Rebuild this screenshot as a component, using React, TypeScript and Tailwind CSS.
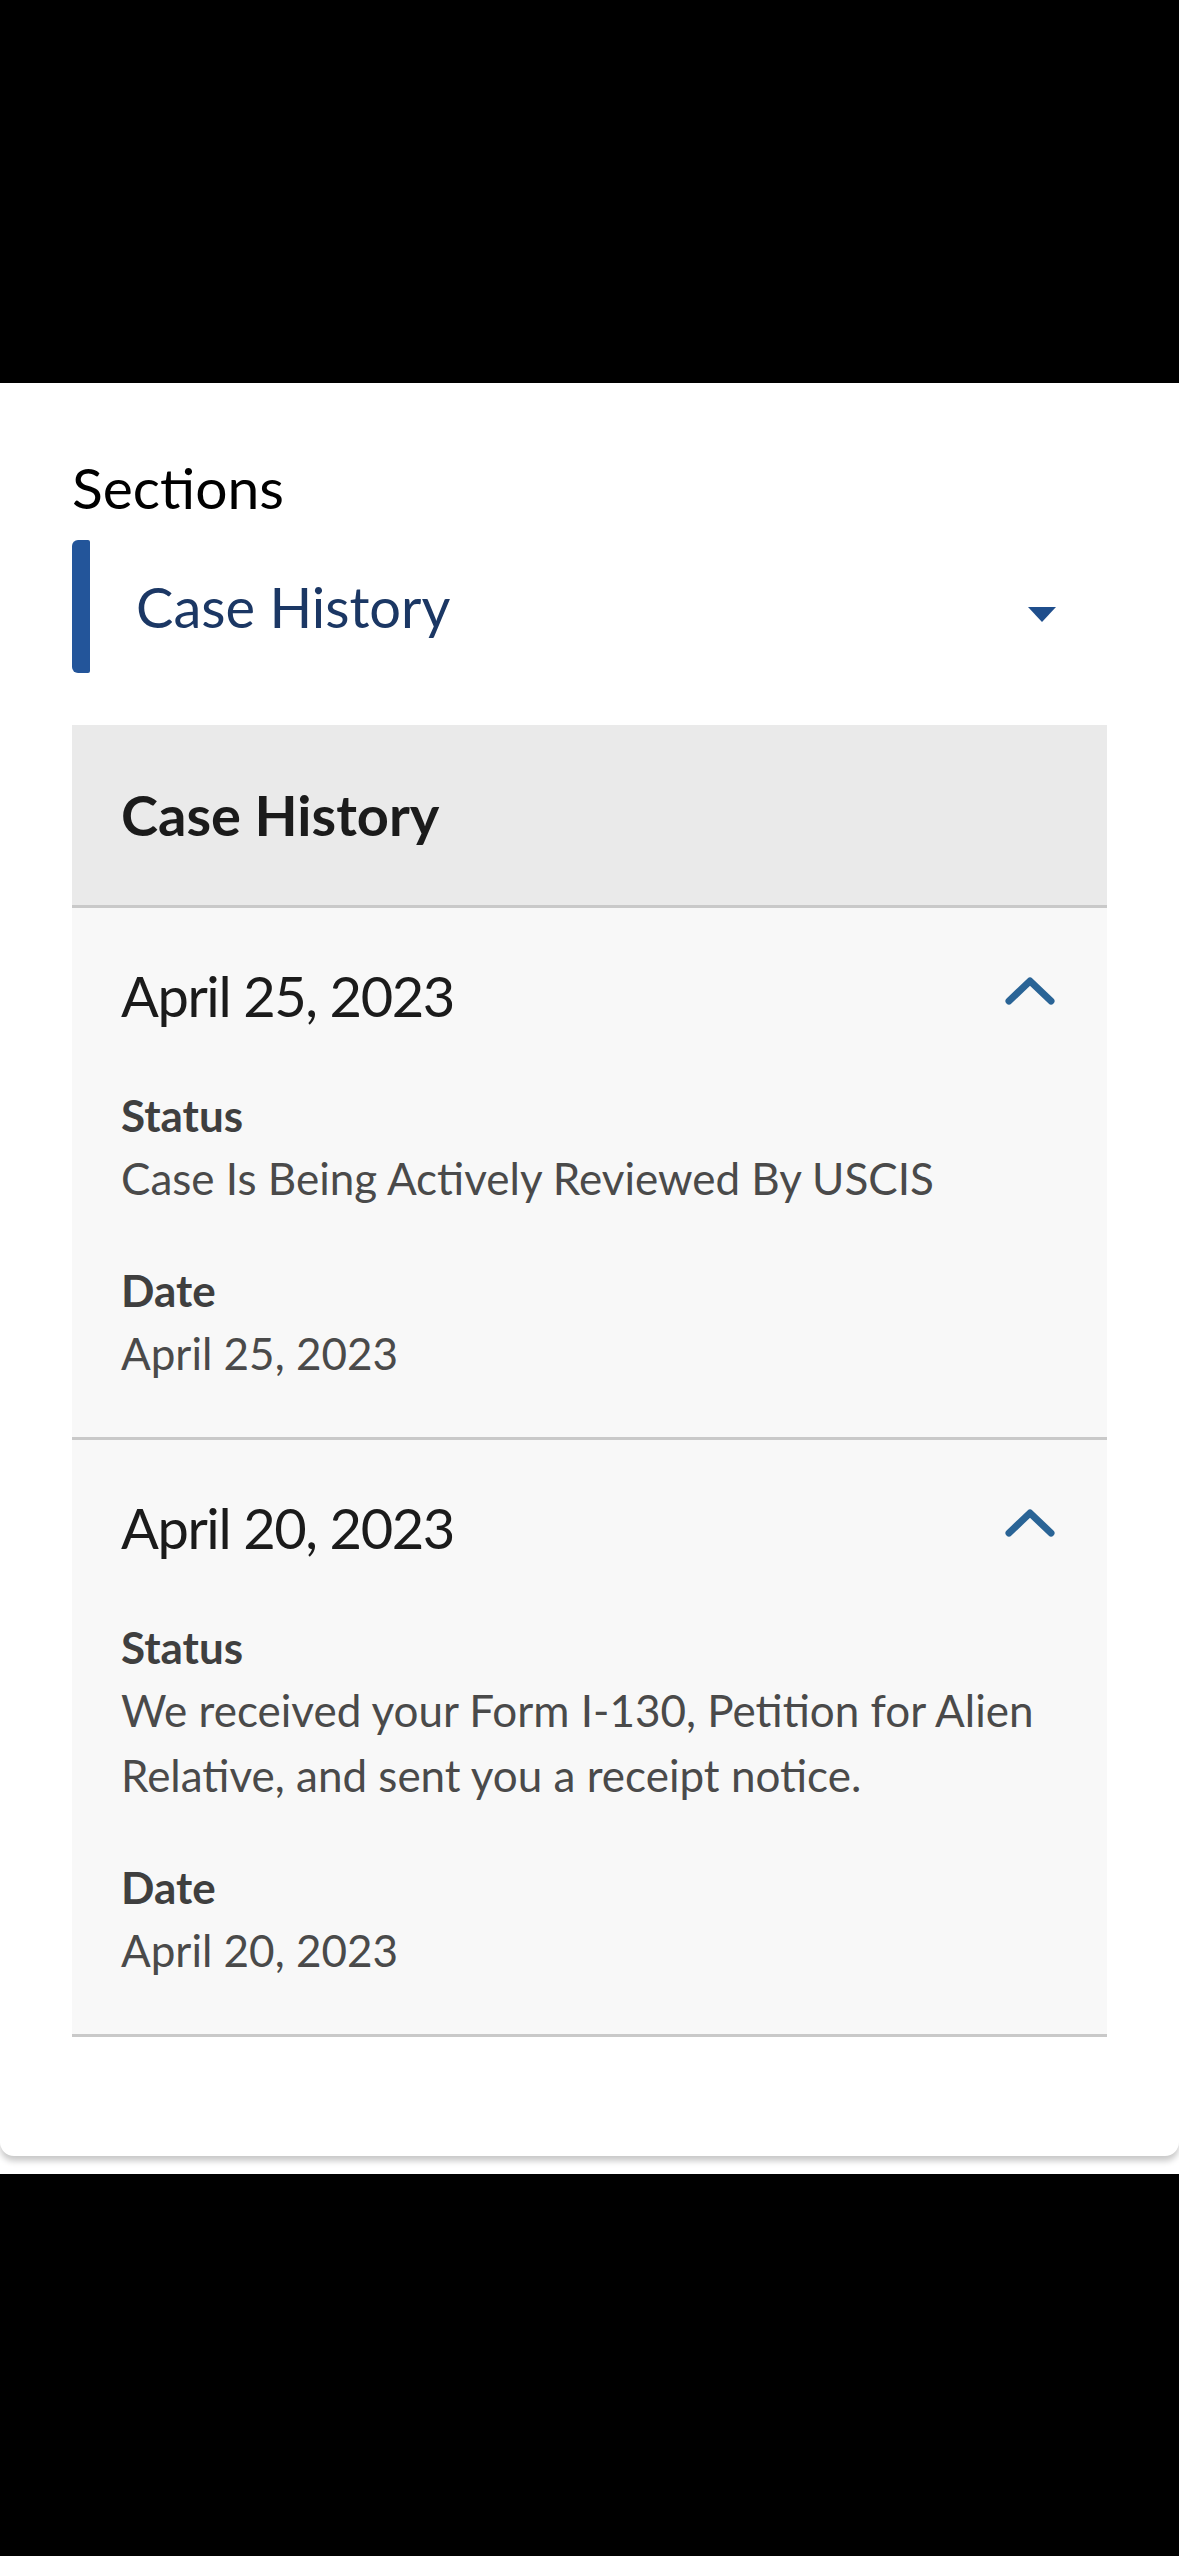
import type { ReactNode } from "react"

type HistoryEntry = {
  date: string
  status: string
}

const entries: HistoryEntry[] = [
  { date: "April 25, 2023", status: "Case Is Being Actively Reviewed By USCIS" },
  {
    date: "April 20, 2023",
    status: "We received your Form I-130, Petition for Alien Relative, and sent you a receipt notice.",
  },
]

function ChevronUp() {
  return (
    <svg width="50" height="28" viewBox="0 0 50 28" fill="none">
      <polyline
        points="4,24 25,4 46,24"
        stroke="#2a6496"
        strokeWidth="7"
        strokeLinecap="round"
        strokeLinejoin="round"
      />
    </svg>
  )
}

function Field({ label, children }: { label: string; children: ReactNode }) {
  return (
    <div>
      <div className="text-[44px] font-bold leading-[62px] text-[#3f3f3f]">{label}</div>
      <div className="text-[44px] leading-[65px] text-[#4a4a4a]">{children}</div>
    </div>
  )
}

function HistoryItem({ entry }: { entry: HistoryEntry }) {
  return (
    <section className="border-b-[3px] border-[#c9c9c9] bg-[#f8f8f8] pb-[51px] pl-[49px] pr-[52px] pt-[56px]">
      <div className="flex items-start justify-between">
        <h3 className="text-[56px] leading-[64px] tracking-[-1.4px] text-[#1b1b1b]">{entry.date}</h3>
        <div className="mt-[13px]">
          <ChevronUp />
        </div>
      </div>
      <div className="mt-[56px] space-y-[48px]">
        <Field label="Status">{entry.status}</Field>
        <Field label="Date">{entry.date}</Field>
      </div>
    </section>
  )
}

export default function App() {
  return (
    <div className="min-h-[2556px] bg-black font-['Lato',sans-serif]">
      <div className="h-[383px]" />
      <div className="bg-white pb-[18px]">
        <div className="rounded-b-[14px] bg-white px-[72px] pb-[119px] pt-[72px] shadow-[0_5px_6px_rgba(0,0,0,0.22)]">
          <p className="text-[57px] leading-[64px] text-black">Sections</p>

          <div className="mt-[21px] flex h-[133px] items-center">
            <div className="h-full w-[18px] rounded-l-[6px] rounded-r-[2px] bg-[#23559a]" />
            <span className="ml-[46px] text-[56px] leading-[64px] text-[#1b3764]">Case History</span>
            <svg className="ml-auto mr-[51px] translate-y-[8px]" width="28" height="15" viewBox="0 0 28 15">
              <polygon points="0,0 28,0 14,15" fill="#1f4e8c" />
            </svg>
          </div>

          <div className="mt-[52px]">
            <div className="flex h-[183px] items-center border-b-[3px] border-[#c9c9c9] bg-[#eaeaea] pl-[49px]">
              <h2 className="text-[56px] font-bold leading-[64px] text-[#1b1b1b]">Case History</h2>
            </div>
            {entries.map((entry) => (
              <HistoryItem key={entry.date} entry={entry} />
            ))}
          </div>
        </div>
      </div>
    </div>
  )
}
